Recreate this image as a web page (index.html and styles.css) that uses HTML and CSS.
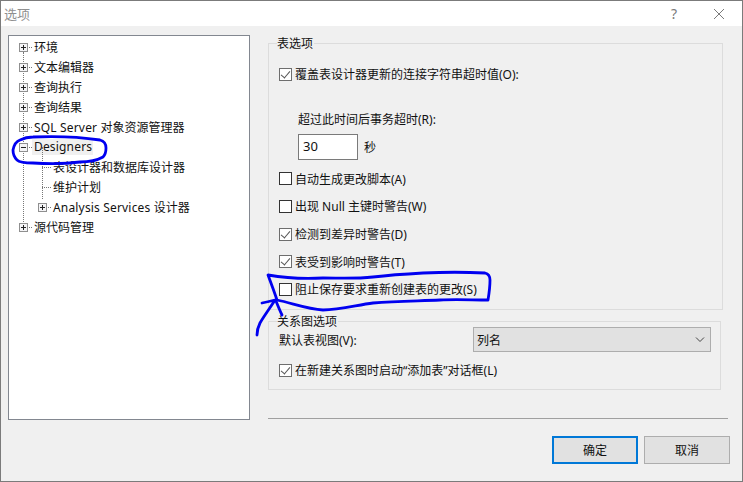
FILE: index.html
```html
<!DOCTYPE html>
<html lang="zh-CN">
<head>
    <meta charset="UTF-8">
    <meta name="viewport" content="width=device-width, initial-scale=1.0">
    <title>选项</title>
    <link rel="stylesheet" href="styles.css">
</head>
<body>
    <div class="dialog">
        <div class="titlebar">
            <span class="title">选项</span>
            <span class="help">?</span>
            <svg class="close" width="12" height="12" viewBox="0 0 12 12"><path d="M1 1l10 10M11 1L1 11" stroke="#7a7a7a" fill="none"/></svg>
        </div>
        <div class="content">
            <div class="tree">
                <div class="row"><span class="exp plus"></span><span class="dots"></span>环境</div>
                <div class="row"><span class="exp plus"></span><span class="dots"></span>文本编辑器</div>
                <div class="row"><span class="exp plus"></span><span class="dots"></span>查询执行</div>
                <div class="row"><span class="exp plus"></span><span class="dots"></span>查询结果</div>
                <div class="row"><span class="exp plus"></span><span class="dots"></span><span class="latin">SQL Server&nbsp;</span>对象资源管理器</div>
                <div class="row"><span class="exp minus"></span><span class="dots"></span><span class="selected latin">Designers</span></div>
                <div class="row sub"><span class="dots long"></span>表设计器和数据库设计器</div>
                <div class="row sub"><span class="dots long"></span>维护计划</div>
                <div class="row sub"><span class="exp plus"></span><span class="dots"></span><span class="latin">Analysis Services&nbsp;</span>设计器</div>
                <div class="row"><span class="exp plus"></span><span class="dots"></span>源代码管理</div>
            </div>
            <div class="panel">
                <div class="group table-group">
                    <div class="legend">表选项</div>
                    <label class="check first"><span class="box on"></span>覆盖表设计器更新的连接字符串超时值(O):</label>
                    <div class="timeout-label">超过此时间后事务超时(R):</div>
                    <div class="timeout"><span class="input">30</span>秒</div>
                    <label class="check"><span class="box"></span>自动生成更改脚本(A)</label>
                    <label class="check"><span class="box"></span>出现 Null 主键时警告(W)</label>
                    <label class="check"><span class="box on"></span>检测到差异时警告(D)</label>
                    <label class="check"><span class="box on"></span>表受到影响时警告(T)</label>
                    <label class="check"><span class="box"></span>阻止保存要求重新创建表的更改(S)</label>
                </div>
                <div class="group diagram-group">
                    <div class="legend">关系图选项</div>
                    <div class="view-row">
                        <span>默认表视图(V):</span>
                        <span class="select">列名<svg width="10" height="6" viewBox="0 0 10 6"><path d="M1 .5l4 4 4-4" stroke="#444" fill="none"/></svg></span>
                    </div>
                    <label class="check"><span class="box on"></span>在新建关系图时启动“添加表”对话框(L)</label>
                </div>
                <div class="separator"></div>
                <div class="buttons">
                    <span class="btn default">确定</span>
                    <span class="btn">取消</span>
                </div>
            </div>
        </div>
        <!-- hand drawn marks on top of the dialog -->
        <svg class="marks" width="743" height="482" viewBox="0 0 743 482">
            <path d="M33 137C55 136 80 137 100 140C104 141 106 144 106 148C106 152 105 155 103 157C96 161 88 162 80 162C65 164 48 164 33 163C25 163 19 162 17 160C14 157 13 153 13 150C14 145 17 141 20 140C24 138 28 137 33 137Z" />
            <path d="M268 275C285 278 305 279 323 278C340 278 355 279 373 277C390 275 405 274 423 273C445 272 465 272 485 273C489 274 490 276 490 280C490 287 489 294 488 300C472 300 456 299 440 300C418 301 396 301 373 303C357 305 340 310 323 310C307 309 292 303 277 300C274 291 271 283 268 275Z" />
            <path d="M262 303C267 302 271 301 275 300C270 308 264 316 260 323C258 327 257 331 257 335" />
            <path d="M276 301C278 306 280 311 282 315" />
        </svg>
    </div>
</body>
</html>
```

FILE: styles.css
```css
html, body {
    height: 100%;
    margin: 0;
}
body {
    font-family: "Noto Sans", "Noto Sans CJK SC", sans-serif;
    font-size: 12px;
    color: #111;
}
.dialog {
    position: relative;
    width: 743px;
    height: 482px;
    box-sizing: border-box;
    border: 1px solid #7b7b7b;
    background-color: #f0f0f0;
    display: flex;
    flex-direction: column;
    overflow: hidden;
}
.titlebar {
    height: 25px;
    flex: none;
    background-color: #fff;
    display: flex;
    align-items: center;
    padding-left: 3px;
    padding-right: 17px;
}
.title {
    flex: 1;
    color: #8f8f8f;
    font-size: 13px;
}
.help {
    color: #7a7a7a;
    font-size: 14px;
    margin-right: 36px;
}
.content {
    flex: 1;
    display: flex;
    padding: 9px 12px 18px 7px;
    gap: 18px;
}
.tree {
    position: relative;
    width: 242px;
    height: 385px;
    box-sizing: border-box;
    flex: none;
    border: 1px solid #828790;
    background-color: #fff;
    padding: 1px 0 0 10px;
}
.tree::before {
    content: "";
    position: absolute;
    left: 14px;
    top: 16px;
    height: 174px;
    border-left: 1px dotted #777;
}
.row {
    height: 20px;
    display: flex;
    align-items: center;
    white-space: nowrap;
    position: relative;
}
.sub {
    padding-left: 19px;
}
.sub:nth-child(7)::before,
.sub:nth-child(8)::before {
    content: "";
    position: absolute;
    left: 23px;
    top: -10px;
    height: 20px;
    border-left: 1px dotted #777;
}
.sub:nth-child(9)::before {
    content: "";
    position: absolute;
    left: 23px;
    top: -10px;
    height: 12px;
    border-left: 1px dotted #777;
}
.exp {
    position: relative;
    z-index: 1;
    width: 9px;
    height: 9px;
    flex: none;
    box-sizing: border-box;
    border: 1px solid #8f8f8f;
    background-color: #f4f4f6;
}
.exp::before {
    content: "";
    position: absolute;
    left: 1px;
    top: 3px;
    width: 5px;
    height: 1px;
    background-color: #222;
}
.plus::after {
    content: "";
    position: absolute;
    left: 3px;
    top: 1px;
    width: 1px;
    height: 5px;
    background-color: #222;
}
.dots {
    width: 3px;
    margin: 0 2px 0 1px;
    flex: none;
    border-top: 1px dotted #777;
}
.dots.long {
    width: 9px;
    margin: 0 2px 0 4px;
}
.latin {
    letter-spacing: 0.17px;
    white-space: pre;
}
.selected {
    background-color: #f0f0f0;
    margin-left: -2px;
    padding-left: 2px;
    height: 16px;
    line-height: 15px;
    width: 59px;
}
.panel {
    flex: 1;
    min-width: 0;
    display: flex;
    flex-direction: column;
}
.group {
    box-sizing: border-box;
    border: 1px solid #dcdcdc;
}
.legend {
    width: fit-content;
    margin: -9px 0 0 -2px;
    padding: 0 1px 0 0;
    height: 17px;
    line-height: 17px;
    background-color: #f0f0f0;
}
.table-group {
    margin-top: 8px;
    width: 455px;
    height: 267px;
    padding-left: 10px;
}
.diagram-group {
    margin-top: 11px;
    width: 453px;
    height: 69px;
    padding-left: 10px;
}
.check {
    display: flex;
    align-items: center;
    height: 18px;
    margin-top: 9.7px;
    white-space: nowrap;
}
.check.first {
    margin-top: 13px;
}
.box {
    width: 13px;
    height: 13px;
    box-sizing: border-box;
    flex: none;
    margin-right: 3px;
    border: 1px solid #333;
    background-color: #fff;
    position: relative;
}
.box.on {
    border-color: #6e6e6e;
}
.box.on::after {
    content: "";
    position: absolute;
    left: 3px;
    top: 0;
    width: 4px;
    height: 8px;
    border: solid #555;
    border-width: 0 1px 1px 0;
    transform: rotate(40deg);
}
.timeout-label {
    margin: 28px 0 0 19px;
    height: 18px;
    line-height: 18px;
}
.timeout {
    display: flex;
    align-items: center;
    margin: 5px 0 0 19px;
    gap: 6px;
    height: 26px;
}
.input {
    width: 60px;
    height: 26px;
    box-sizing: border-box;
    border: 1px solid #7a7a7a;
    background-color: #fff;
    padding-left: 4px;
    line-height: 22px;
    font-size: 13px;
}
.view-row {
    display: flex;
    align-items: center;
    justify-content: space-between;
    height: 25px;
    margin-top: -3px;
    padding-right: 9px;
}
.select {
    width: 238px;
    height: 25px;
    box-sizing: border-box;
    border: 1px solid #adadad;
    background-color: #e1e1e1;
    display: flex;
    align-items: center;
    justify-content: space-between;
    padding: 0 5px 0 3px;
}
.diagram-group .check {
    margin-top: 9px;
}
.separator {
    margin-top: 28px;
    width: 460px;
    border-top: 1px solid #a0a0a0;
}
.buttons {
    margin-top: 17px;
    width: 462px;
    display: flex;
    justify-content: flex-end;
    gap: 6px;
}
.btn {
    width: 86px;
    height: 28px;
    box-sizing: border-box;
    border: 1px solid #adadad;
    background-color: #e1e1e1;
    display: flex;
    align-items: center;
    justify-content: center;
}
.btn.default {
    border: 2px solid #0078d7;
}
.marks {
    position: absolute;
    left: -1px;
    top: -1px;
    pointer-events: none;
}
.marks path {
    fill: none;
    stroke: #0000f0;
    stroke-width: 2.8;
    stroke-linecap: round;
    stroke-linejoin: round;
}
```
